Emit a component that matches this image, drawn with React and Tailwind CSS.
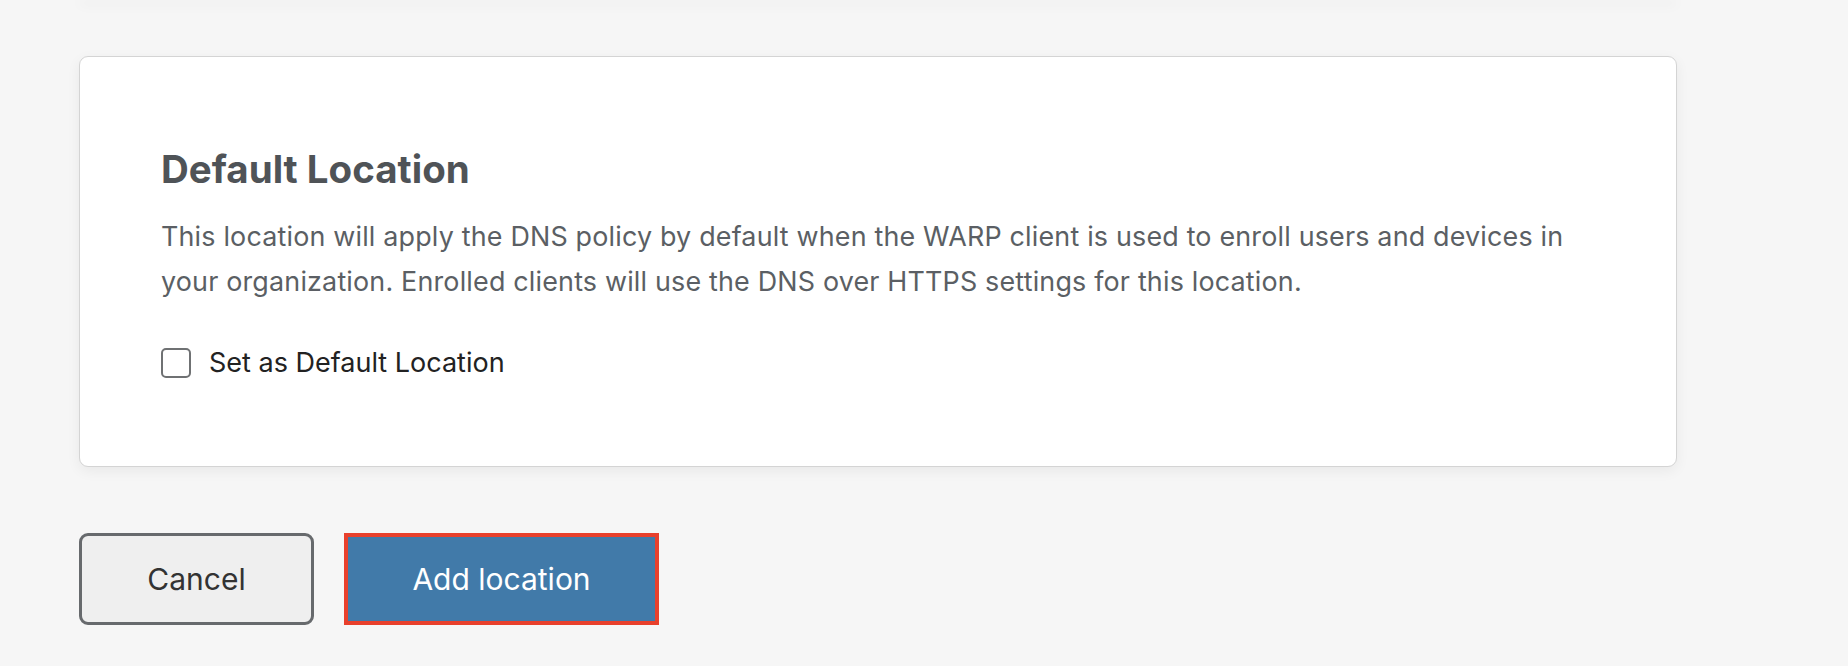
export default function App() {
  return (
    <div className="min-h-[668px] w-full bg-[#f6f6f6] font-['Inter',sans-serif]">
      <div className="mx-[79px] w-[1598px]">
        <div className="h-[2px] -mt-[2px] bg-[#f0f0f0] shadow-[0_4px_12px_rgba(0,0,0,0.1)]" />
        <div className="mt-[56px] h-[411px] rounded-[9px] border border-[#d4d4d4] bg-white pl-[81px] pt-[84px] shadow-[0_4px_14px_rgba(0,0,0,0.06)]">
          <h2 className="text-[38.5px] font-bold leading-[56px] text-[#4f5357]">Default Location</h2>
          <p className="mt-[17px] w-[1430px] text-[26.9px] leading-[45px] tracking-[0.18px] text-[#5b5f64]">
            This location will apply the DNS policy by default when the WARP client is used to enroll users and devices in your organization. Enrolled clients will use the DNS over HTTPS settings for this location.
          </p>
          <label className="mt-[41px] flex items-center gap-[18px]">
            <span className="block h-[30px] w-[30px] rounded-[5px] border-2 border-[#6f7173] bg-white" />
            <span className="text-[27px] leading-[36px] text-[#222]">Set as Default Location</span>
          </label>
        </div>
        <div className="mt-[66px] flex gap-[30px]">
          <button className="flex h-[92px] w-[235px] items-center justify-center rounded-[9px] border-[3px] border-[#676a6d] bg-[#efefef] text-[30px] text-[#333]">
            Cancel
          </button>
          <button className="flex h-[92px] w-[315px] items-center justify-center border-[4px] border-[#e8402c] bg-[#417aa9] text-[30px] text-white">
            Add location
          </button>
        </div>
      </div>
    </div>
  );
}
